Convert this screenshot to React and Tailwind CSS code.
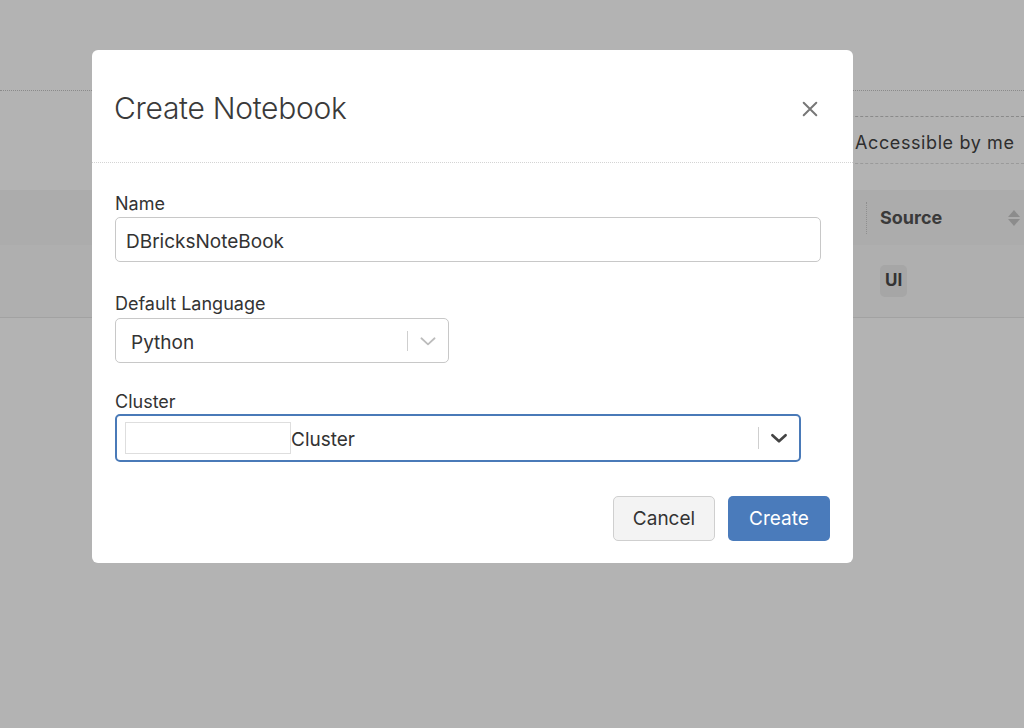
import React from "react";

function Chevron({ className }) {
  return (
    <svg viewBox="0 0 20 20" className={className} fill="none" stroke="currentColor" strokeLinecap="round" strokeLinejoin="round">
      <path d="M4 7.5 L10 13 L16 7.5" />
    </svg>
  );
}

export default function App() {
  const font = { fontFamily: "Inter, 'Liberation Sans', Arial, sans-serif" };
  return (
    <div className="relative w-[1024px] h-[728px] overflow-hidden bg-[#b3b3b3]" style={font}>
      {/* background page */}
      <div className="h-[90px]" />
      <div className="border-t border-dotted border-[#8a8a8a]" />
      <div className="h-[99px] flex justify-end">
        <div className="w-[400px] flex flex-col">
          <div className="h-[25px]" />
          <div className="border-t border-dashed border-[#8a8a8a]" />
          <div className="h-[46px] flex items-center pl-[231px] pt-[4px] text-[18px] tracking-[0.6px] text-[#2e2e2e] whitespace-nowrap">Accessible by me</div>
          <div className="border-t border-dashed border-[#9a9a9a]" />
        </div>
      </div>
      <div className="h-[55px] bg-[#acacac] flex items-center pl-[866px]">
        <div className="h-[32px] border-l border-dotted border-[#8f8f8f]" />
        <div className="ml-[13px] text-[18px] font-bold text-[#3a3a3a]">Source</div>
        <div className="ml-auto mr-[4px] flex flex-col gap-[2px]">
          <div className="w-0 h-0 border-l-[6px] border-r-[6px] border-b-[7px] border-l-transparent border-r-transparent border-b-[#8c8c8c]" />
          <div className="w-0 h-0 border-l-[6px] border-r-[6px] border-t-[7px] border-l-transparent border-r-transparent border-t-[#8c8c8c]" />
        </div>
      </div>
      <div className="h-[72px] bg-[#afafaf] flex items-center pl-[880px]">
        <div className="h-[32px] px-[5px] rounded-[5px] bg-[#a6a6a6] flex items-center text-[17px] font-bold text-[#333]">UI</div>
      </div>
      <div className="border-t border-[#a2a2a2]" />

      {/* modal */}
      <div className="absolute left-[92px] top-[50px] w-[761px] h-[513px] rounded-[6px] bg-white flex flex-col">
        <div className="h-[113px] flex items-center justify-between pl-[22px] pr-[34px] border-b border-dotted border-[#d4d4d4] shrink-0">
          <div className="text-[30px] font-light text-[#3a3a3a] tracking-[-0.3px] mt-[4px]">Create Notebook</div>
          <svg viewBox="0 0 20 20" className="w-[18px] h-[18px] text-[#777] mt-[6px]" stroke="currentColor" strokeWidth="2.2" strokeLinecap="round">
            <path d="M3 3 L17 17 M17 3 L3 17" />
          </svg>
        </div>
        <div className="pl-[23px] pr-[23px] pt-[27px] flex flex-col">
          <div className="h-[24px] text-[18px] leading-[28px] text-[#333]">Name</div>
          <div className="mt-[3px] w-[706px] h-[45px] border border-[#c8c8c8] rounded-[5px] flex items-center pl-[10px] pt-[5px] text-[19px] text-[#333]">DBricksNoteBook</div>

          <div className="mt-[28px] h-[24px] text-[18px] leading-[28px] text-[#333]">Default Language</div>
          <div className="mt-[4px] w-[334px] h-[45px] border border-[#c8c8c8] rounded-[5px] flex items-center pl-[15px] text-[19px] text-[#333]">
            <span className="flex-1 pt-[5px]">Python</span>
            <div className="h-[20px] border-l border-[#cfcfcf]" />
            <Chevron className="w-[22px] h-[22px] mx-[9px] text-[#bcbcbc] stroke-[1.6]" />
          </div>

          <div className="mt-[25px] h-[24px] text-[18px] leading-[28px] text-[#333]">Cluster</div>
          <div className="mt-[2px] w-[686px] h-[48px] border-2 border-[#4a7ab8] rounded-[5px] flex items-center pl-[8px] text-[19px] text-[#333]">
            <div className="w-[166px] h-[32px] border border-[#dedede] bg-white" />
            <span className="flex-1 pt-[5px]">Cluster</span>
            <div className="h-[22px] border-l border-[#cfcfcf]" />
            <Chevron className="w-[22px] h-[22px] mx-[9px] text-[#444] stroke-[2.4]" />
          </div>

          <div className="mt-[34px] flex justify-end gap-[13px]">
            <div className="w-[102px] h-[45px] rounded-[5px] border border-[#cfcfcf] bg-[#f3f3f3] flex items-center justify-center pt-[2px] text-[19px] text-[#333]">Cancel</div>
            <div className="w-[102px] h-[45px] rounded-[5px] bg-[#4a7bbb] flex items-center justify-center pt-[2px] text-[19px] text-white">Create</div>
          </div>
        </div>
      </div>
    </div>
  );
}
